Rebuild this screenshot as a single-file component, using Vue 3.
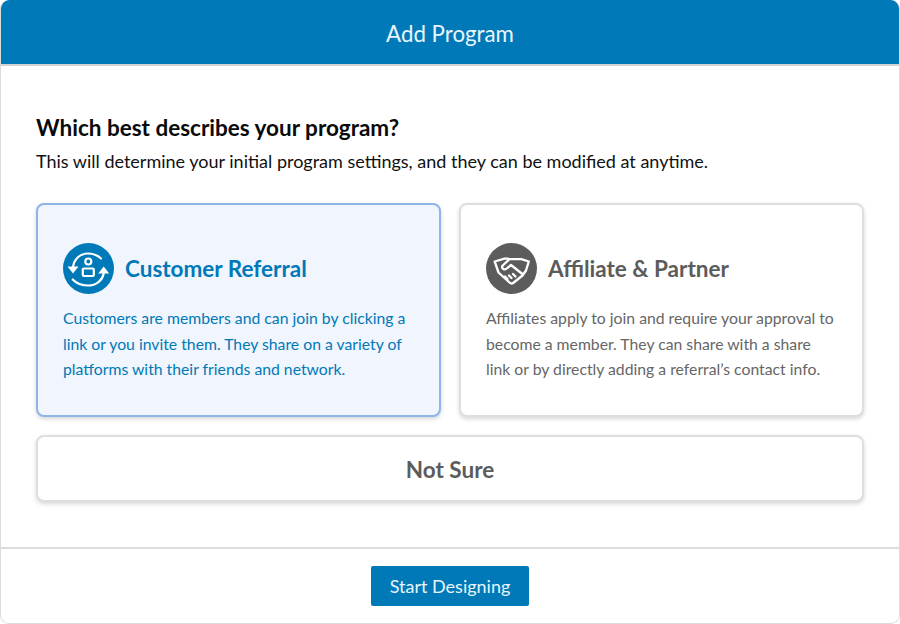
<script setup>
const cards = [
  { id: 'customer', title: 'Customer Referral', text: 'Customers are members and can join by clicking a link or you invite them. They share on a variety of platforms with their friends and network.', active: true },
  { id: 'affiliate', title: 'Affiliate & Partner', text: 'Affiliates apply to join and require your approval to become a member. They can share with a share link or by directly adding a referral’s contact info.', active: false }
]
</script>

<template>
  <div class="modal">
    <header class="head">Add Program</header>
    <main class="body">
      <h1 class="title">Which best describes your program?</h1>
      <p class="sub">This will determine your initial program settings, and they can be modified at anytime.</p>
      <div class="grid">
        <div v-for="c in cards" :key="c.id" class="card" :class="{ active: c.active }">
          <div class="card-head">
            <svg class="icon" viewBox="0 0 51 51">
              <circle cx="25.5" cy="25.5" r="25.5" class="disc" />
              <template v-if="c.id === 'customer'">
                <g fill="none" stroke="#fff" stroke-width="2.2" stroke-linecap="round" stroke-linejoin="round">
                  <path d="M10 25C10.500 16.500 17 10.500 25 10.500c5 0 9.500 1.700 13 5" />
                  <path d="M40.700 30c-1 7.500-7.700 12.500-15.700 12.500-5.500 0-11.500-2-15.300-6" />
                  <circle cx="25.300" cy="18.500" r="3" />
                  <rect x="19.800" y="25.500" width="11" height="7.500" rx="1" />
                </g>
                <path d="M4.500 23.500h11l-5.500 7z" fill="#fff" />
                <path d="M35.200 30.500h11l-5.500-7z" fill="#fff" />
              </template>
              <g v-else fill="none" stroke="#fff" stroke-width="2.3" stroke-linecap="round" stroke-linejoin="round">
                <path d="M22 15.700h-3.500L8.700 18.500l3.800 11 11 10c1 1 2.500 1.300 3.700.5l9.300-7.500 3.500-5 2.800-9-7.500-2.300H23.500l-6.800 6.300c-1 1.300-.7 2.700.6 3.400 1.300.7 2.700.4 3.700-.6l4-3.300L37 31.500" />
                <path d="M21.500 36l-2.500-2.500M25.500 35l-2.500-2.500M29.500 33.500l-2.500-2.500" />
              </g>
            </svg>
            <h2 class="card-title">{{ c.title }}</h2>
          </div>
          <p class="card-text">{{ c.text }}</p>
        </div>
        <div class="card unsure">Not Sure</div>
      </div>
    </main>
    <footer class="foot">
      <button class="btn">Start Designing</button>
    </footer>
  </div>
</template>

<style scoped>
.modal {
  width: 900px;
  height: 624px;
  box-sizing: border-box;
  display: flex;
  flex-direction: column;
  background: #fff;
  border: 1px solid #dcdcdc;
  border-top: 0;
  border-radius: 9px;
  overflow: hidden;
  font-family: Lato, "Liberation Sans", sans-serif;
}
.head {
  height: 66px;
  flex: none;
  box-sizing: border-box;
  margin: 0 -1px;
  background: #0079b8;
  border-bottom: 2px solid #cfd3d6;
  color: #e8f5fc;
  font-size: 22.300px;
  line-height: 68px;
  text-align: center;
}
.body {
  flex: 1;
  min-height: 0;
  padding: 47px 35px 0;
}
.title {
  margin: 0;
  font-size: 22.500px;
  line-height: 30px;
  font-weight: 700;
  color: #0a0a0a;
}
.sub {
  margin: 4px 0 0;
  font-size: 18px;
  line-height: 28px;
  color: #111;
}
.grid {
  margin-top: 28px;
  display: grid;
  grid-template-columns: 405px 405px;
  column-gap: 18px;
  row-gap: 18px;
}
.card {
  box-sizing: border-box;
  height: 214px;
  padding: 38px 25px 0;
  border: 2px solid #dedede;
  border-radius: 8px;
  background: #fff;
  color: #5c5c5c;
  box-shadow: 0 2px 4px rgba(0, 0, 0, 0.16);
}
.card.active {
  background: #f1f5fd;
  border-color: #8fb4ea;
  color: #0079b8;
}
.card-head {
  display: flex;
  align-items: center;
  gap: 11px;
}
.icon {
  width: 51px;
  height: 51px;
  flex: none;
}
.disc { fill: #5c5c5c; }
.active .disc { fill: #0079b8; }
.card-title {
  margin: 0;
  font-size: 22.500px;
  font-weight: 700;
  line-height: 30px;
}
.card-text {
  margin: 11px 0 0;
  font-size: 15.750px;
  line-height: 25.500px;
  color: #666;
}
.active .card-text { color: #0079b8; }
.unsure {
  grid-column: 1 / -1;
  height: 67px;
  padding: 0;
  font-size: 22.500px;
  font-weight: 700;
  line-height: 65px;
  text-align: center;
}
.foot {
  flex: none;
  height: 76px;
  box-sizing: border-box;
  border-top: 2px solid #dcdcdc;
  display: flex;
  justify-content: center;
  padding-top: 17px;
}
.btn {
  width: 158px;
  height: 40px;
  border: 0;
  border-radius: 2px;
  background: #0079b8;
  color: #e8f5fc;
  font-family: inherit;
  font-size: 18px;
  padding: 0;
}
</style>
